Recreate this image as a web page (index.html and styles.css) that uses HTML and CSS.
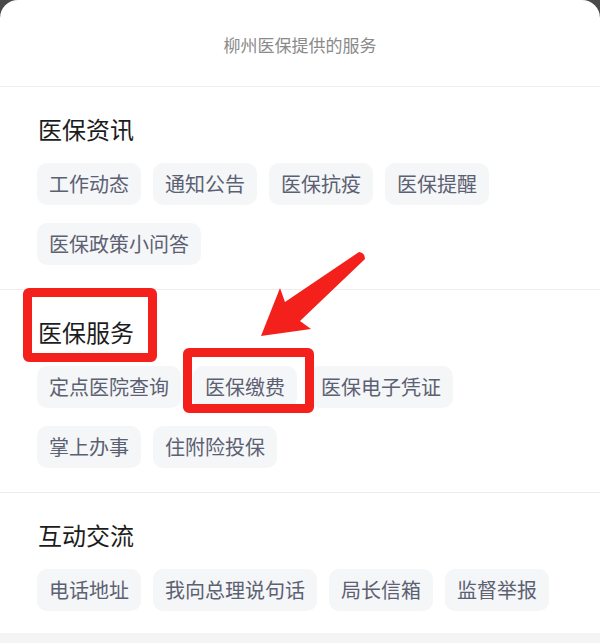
FILE: index.html
```html
<!DOCTYPE html>
<html lang="zh-CN">
  <head>
    <meta charset="UTF-8" />
    <meta name="viewport" content="width=device-width, initial-scale=1.0" />
    <title>柳州医保提供的服务</title>
    <link rel="stylesheet" href="styles.css">
  </head>
  <body>
    <div class="sheet">
      <div class="card">
        <div class="card-title">柳州医保提供的服务</div>

        <div class="section">
          <h2>医保资讯</h2>
          <div class="chips">
            <span class="chip">工作动态</span>
            <span class="chip">通知公告</span>
            <span class="chip">医保抗疫</span>
            <span class="chip">医保提醒</span>
            <span class="chip">医保政策小问答</span>
          </div>
        </div>

        <div class="section">
          <h2>医保服务</h2>
          <div class="chips">
            <span class="chip">定点医院查询</span>
            <span class="chip">医保缴费</span>
            <span class="chip">医保电子凭证</span>
            <span class="chip">掌上办事</span>
            <span class="chip">住附险投保</span>
          </div>
        </div>

        <div class="section last">
          <h2>互动交流</h2>
          <div class="chips">
            <span class="chip">电话地址</span>
            <span class="chip">我向总理说句话</span>
            <span class="chip">局长信箱</span>
            <span class="chip">监督举报</span>
          </div>
        </div>
      </div>
      <div class="tray"></div>

      <!-- red annotation drawn over the screenshot -->
      <div class="mark mark-title"></div>
      <div class="mark mark-chip"></div>
      <svg class="arrow" width="600" height="643" viewBox="0 0 600 643">
        <path d="M261 336 L280 288 L285 302 L359 252 Q365 253 365 259 L300 321 L311 329 Z" fill="#f4201b" />
      </svg>
    </div>
  </body>
</html>
```

FILE: styles.css
```css
html, body {
  margin: 0;
  padding: 0;
}

body {
  font-family: "Noto Sans CJK SC", "Noto Sans", sans-serif;
  background-color: #f4f4f5;
}

.sheet {
  position: relative;
  width: 600px;
  height: 643px;
  overflow: hidden;
  background-color: #4a4a4a;
}

.card {
  background-color: #fff;
  border-radius: 18px 18px 0 0;
  height: 633px;
  box-sizing: border-box;
}

.card-title {
  text-align: center;
  font-size: 17px;
  line-height: 24px;
  color: #8a8a8a;
  padding: 33px 0 29px;
  border-bottom: 1px solid #ededed;
}

.section {
  padding: 26px 40px 24px 37px;
  border-bottom: 1px solid #ededed;
}

.section.last {
  border-bottom: none;
  padding-bottom: 23px;
}

h2 {
  margin: 0 0 18px 1px;
  font-size: 24px;
  line-height: 32px;
  font-weight: 400;
  color: #1c1c1c;
}

.chips {
  display: flex;
  flex-wrap: wrap;
  gap: 18px 12px;
}

.chip {
  background-color: #f5f6f8;
  color: #5b6172;
  font-size: 20px;
  line-height: 24px;
  padding: 9px 12px;
  border-radius: 10px;
}

.tray {
  height: 10px;
  background-color: #f4f4f5;
}

.mark {
  position: absolute;
  border: 9px solid #f4201b;
  border-radius: 6px;
  box-sizing: border-box;
}

.mark-title {
  left: 23px;
  top: 288px;
  width: 134px;
  height: 74px;
}

.mark-chip {
  left: 183px;
  top: 348px;
  width: 131px;
  height: 65px;
}

.arrow {
  position: absolute;
  left: 0;
  top: 0;
  pointer-events: none;
}
```
